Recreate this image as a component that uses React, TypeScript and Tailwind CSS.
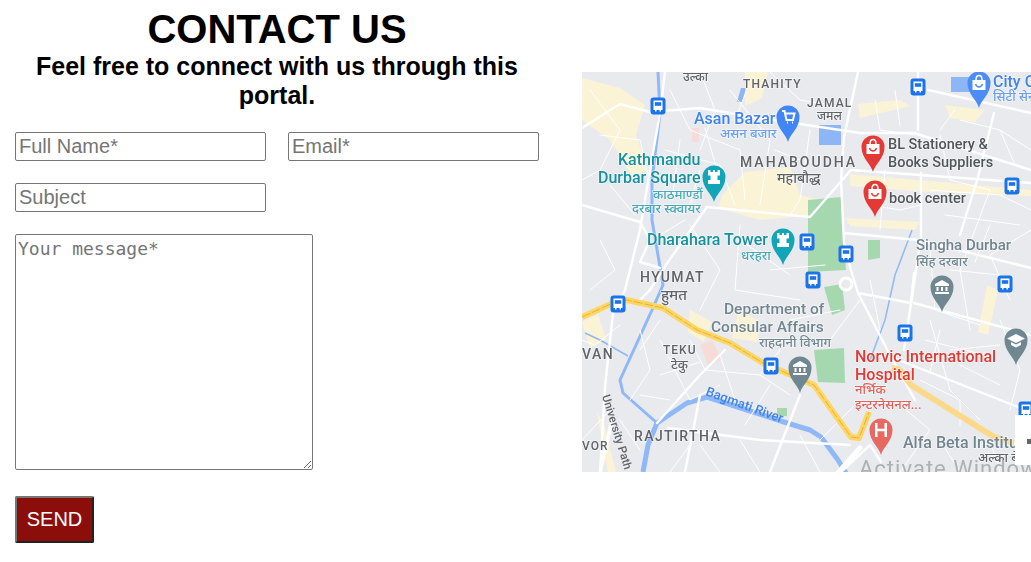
const fieldClass =
  "h-[29px] w-[251px] rounded-[2px] border border-[#767676] bg-white px-[3px] pb-[2px] text-[20px] text-black outline-none placeholder:text-[#757575]";

const ROADS_MAIN = [
  "582,128 620,104 650,112 700,108 760,118 860,133 914,133 1031,170",
  "665,72 660,113 650,170 640,230 625,290 613,313 605,387 600,473",
  "858,72 844,137 841,180 844,243 851,270 858,293 891,357 915,400",
  "582,205 640,222 650,240 640,262 660,268",
  "707,207 810,217 851,170 1031,183",
  "928,90 1031,113",
  "918,72 918,130",
  "994,113 978,177 960,235",
  "921,173 921,237 904,350",
  "844,233 918,240 1031,268",
  "858,293 911,303 914,273",
  "707,207 668,262 650,290 640,300",
  "657,423 700,375 725,350",
  "840,473 870,445 881,462",
  "668,428 760,440 850,445",
  "700,395 685,472",
  "800,395 770,472",
  "914,303 1031,335",
  "891,357 1031,412",
];

const ROADS_THIN = [
  "590,90 620,130 600,170 582,180",
  "600,135 640,140 648,175",
  "670,90 690,130 740,150 745,200",
  "665,150 720,165 735,205",
  "700,72 715,110 700,150",
  "730,90 770,140 760,205",
  "770,72 800,100 830,105",
  "810,130 800,200 790,215",
  "875,100 880,130 915,135",
  "940,135 950,180 990,190",
  "960,120 1000,130 1031,150",
  "870,205 900,210 921,205",
  "930,190 1000,195 1031,210",
  "990,190 960,270 970,330",
  "1031,230 990,255 1010,300",
  "930,250 935,310 980,325",
  "690,225 720,270 700,310",
  "740,225 735,290 800,300",
  "770,270 825,265",
  "600,240 615,270 590,290",
  "640,330 650,370 630,400",
  "660,340 690,400 720,385",
  "690,340 705,370 760,375 790,395",
  "760,375 780,350",
  "620,325 595,345 582,340",
  "610,410 582,440",
  "640,395 670,400",
  "700,445 720,472",
  "740,440 760,472",
  "800,435 820,472",
  "930,320 950,390 980,420",
  "900,405 930,430 900,472",
  "920,380 960,400 960,425",
  "1000,320 1020,370 1010,410",
  "860,300 830,340 815,345",
  "790,320 840,310",
  "705,128 720,180",
  "950,350 1000,345",
  "940,330 930,372",
  "680,140 672,200",
  "685,220 660,235",
  "610,185 635,215",
  "700,170 690,205",
  "775,150 800,160",
  "740,240 790,275",
  "660,320 640,350",
  "720,355 735,400",
  "770,385 745,425",
  "660,375 700,362",
  "620,420 640,450",
  "690,445 670,472",
  "820,440 860,400",
  "880,230 885,170",
  "945,215 1020,225",
  "990,225 975,262",
  "1000,130 1015,165",
  "950,270 1000,275",
  "925,340 985,355",
  "960,365 1000,385",
  "940,440 960,472",
  "990,440 1000,472",
  "895,90 900,125",
  "955,110 940,130",
  "870,280 880,330",
  "735,120 745,95",
];

const PINS = [
  { x: 788, y: 117, c: "#4285f4", icon: "cart" },
  { x: 714, y: 177, c: "#12a5b8", icon: "rook" },
  { x: 783, y: 240, c: "#12a5b8", icon: "rook" },
  { x: 873, y: 147, c: "#e53935", icon: "bag" },
  { x: 875, y: 192, c: "#e53935", icon: "bag" },
  { x: 979, y: 83, c: "#4c8df5", icon: "bag" },
  { x: 800, y: 368, c: "#6f8791", icon: "bank" },
  { x: 942, y: 287, c: "#6f8791", icon: "bank" },
  { x: 1016, y: 340, c: "#6f8791", icon: "grad" },
  { x: 881, y: 430, c: "#e66a62", icon: "h" },
];

const BUSES = [
  [658, 106],
  [807, 242],
  [918, 87],
  [1012, 186],
  [846, 254],
  [618, 304],
  [771, 366],
  [813, 280],
  [1005, 284],
  [905, 333],
  [1026, 410],
];

const BLUE = "#3f84ea";
const TEAL = "#16929f";
const GREY = "#5f6368";
const SLATE = "#70858f";
const RED = "#dd3b34";

const LABELS: [string, number, number, number, string, number?][] = [
  ["उल्का", 683, 81, 12, GREY],
  ["THAHITY", 743, 88, 12, GREY, 1.2],
  ["Asan Bazar", 694, 124, 16, BLUE],
  ["असन बजार", 720, 138, 13, "#6aa0ef"],
  ["JAMAL", 807, 107, 12, GREY, 1.2],
  ["जमल", 817, 120, 12, GREY],
  ["MAHABOUDHA", 740, 167, 14, GREY, 2],
  ["महाबौद्ध", 777, 183, 14, GREY],
  ["Kathmandu", 618, 165, 16, TEAL],
  ["Durbar Square", 598, 183, 16, TEAL],
  ["काठमाण्डौं", 653, 199, 13, "#45aab5"],
  ["दरबार स्क्वायर", 632, 213, 13, "#45aab5"],
  ["Dharahara Tower", 647, 245, 16, TEAL],
  ["धरहरा", 741, 260, 13, "#45aab5"],
  ["BL Stationery &", 888, 149, 14.5, "#51565a"],
  ["Books Suppliers", 888, 167, 14.5, "#51565a"],
  ["book center", 889, 203, 14.5, "#51565a"],
  ["Singha Durbar", 916, 250, 15, SLATE],
  ["सिंह दरबार", 916, 266, 13, SLATE],
  ["City C", 993, 87, 16, BLUE],
  ["सिटी सेन", 993, 101, 13, "#6aa0ef"],
  ["HYUMAT", 640, 282, 14, GREY, 1.5],
  ["हुमत", 661, 300, 15, GREY],
  ["Department of", 724, 314, 15.5, SLATE],
  ["Consular Affairs", 711, 332, 15.5, SLATE],
  ["राहदानी विभाग", 759, 347, 13, SLATE],
  ["VAN", 582, 359, 14, GREY, 1.5],
  ["TEKU", 663, 354, 12, GREY, 1],
  ["टेकु", 671, 369, 13, GREY],
  ["RAJTIRTHA", 634, 441, 14, GREY, 1.4],
  ["VOR", 582, 450, 12, GREY, 1],
  ["Norvic International", 855, 362, 16, RED],
  ["Hospital", 855, 380, 16, RED],
  ["नर्भिक", 855, 394, 13, "#e4605a"],
  ["इन्टरनेसनल...", 855, 409, 13, "#e4605a"],
  ["Alfa Beta Institu", 903, 448, 16, SLATE],
  ["अल्का बे", 978, 462, 13, GREY],
];

function Pin({ x, y, c, icon }: { x: number; y: number; c: string; icon: string }) {
  return (
    <g transform={`translate(${x} ${y})`}>
      <path d="M0 25C-2 17-11.500 11-11.500 0A11.500 11.500 0 0 1 11.500 0C11.500 11 2 17 0 25Z" fill={c} />
      {icon === "cart" && (
        <path d="M-6-6H-3.500L-1.500 3H5L6.500-3.500H-2.800M-1 5.500H0M4 5.500H5" fill="none" stroke="#fff" strokeWidth="2" />
      )}
      {icon === "rook" && (
        <path d="M-6-7H-3.500V-5H-1V-7H1V-5H3.500V-7H6V-1.500H3.500V3H6V7H-6V3H-3.500V-1.500H-6Z" fill="#fff" />
      )}
      {icon === "bag" && (
        <>
          <path d="M-6.500-3H6.500V7H-6.500Z" fill="#fff" />
          <path d="M-3-3C-3-9 3-9 3-3" fill="none" stroke="#fff" strokeWidth="1.500" />
          <path d="M-3.500 1C-2 5 2 5 3.500 1" fill="none" stroke={c} strokeWidth="1.500" />
        </>
      )}
      {icon === "bank" && (
        <path d="M0-7L7-3V-1H-7V-3ZM-5.500 0H-3.500V4H-5.500ZM-1 0H1V4H-1ZM3.500 0H5.500V4H3.500ZM-7 5H7V7H-7Z" fill="#fff" />
      )}
      {icon === "grad" && (
        <path d="M0-6L9-1.500 0 3-9-1.500ZM-5 2L0 4.500 5 2V5L0 7.500-5 5Z" fill="#fff" />
      )}
      {icon === "h" && (
        <path d="M-6-7H-3.500V-1.200H3.500V-7H6V7H3.500V1.200H-3.500V7H-6Z" fill="#fff" />
      )}
    </g>
  );
}

function Bus({ x, y }: { x: number; y: number }) {
  return (
    <g transform={`translate(${x} ${y})`}>
      <rect x="-7.500" y="-8.500" width="15" height="17" rx="3" fill="#1a73e8" />
      <path d="M-4.500-5.500H4.500V4H3V5.500H1.500V4H-1.500V5.500H-3V4H-4.500Z" fill="#fff" />
      <rect x="-3.200" y="-3.800" width="6.400" height="3.600" fill="#1a73e8" />
    </g>
  );
}

function MapImage() {
  return (
    <svg viewBox="582 72 449 400" className="block h-[400px] w-[449px] shrink-0 blur-[0.45px]">
      <rect x="582" y="72" width="449" height="400" fill="#e9eaee" />

      {/* built up areas */}
      <g fill="#fbf3d6">
        <path d="M582 78L620 88 645 105 636 135 648 170 632 176 610 140 582 120Z" />
        <path d="M745 72H768L762 98 745 106Z" />
        <path d="M722 195L745 172 790 167 800 195 842 205 842 213 760 220 718 208Z" />
        <path d="M850 174L1031 190V196L930 192 850 186Z" />
        <path d="M858 104L900 100 910 106 860 118Z" />
        <path d="M945 105L985 110 975 122 950 118Z" />
        <path d="M845 218L920 222 915 230 850 226Z" />
        <path d="M582 322L598 314 606 340 590 348Z" />
        <path d="M690 310L712 322 704 342 688 332Z" />
        <path d="M738 312L758 320 758 342 732 338Z" />
        <path d="M987 285L998 290 988 335 978 332Z" />
        <path d="M597 412L604 425 616 472H608Z" />
      </g>

      {/* parks and hospital grounds */}
      <g fill="#a6d8b0">
        <path d="M808 200L842 197 846 270 808 272Z" />
        <path d="M824 287L842 284 845 310 832 315Z" />
        <path d="M814 350L844 348 845 383 818 382Z" />
        <path d="M868 240L880 240 880 258 868 260Z" />
        <path d="M777 408L787 408 787 416 777 416Z" />
      </g>
      <g fill="#f6dcd8">
        <path d="M700 345L712 340 722 360 708 365Z" />
        <path d="M692 128L699 128 699 142 692 142Z" />
      </g>

      {/* water */}
      <g fill="#8db6f7">
        <rect x="819" y="125" width="22" height="20" />
        <rect x="951" y="77" width="20" height="15" />
        <path d="M741 88L746 88 742 102 737 102Z" />
      </g>
      <g fill="none" stroke="#8fb8f8" strokeLinejoin="round">
        <polyline strokeWidth="3" points="658,72 660,113 652,180 652,220 660,267 663,285 652,310 620,380 623,393 657,423" />
        <polyline strokeWidth="1.500" points="585,333 600,340 628,356" />
        <polyline strokeWidth="1.500" points="895,275 885,320 870,360" />
        <polyline strokeWidth="5" points="657,423 687,403 707,397 747,410 787,423 810,430 821,437 838,460 846,473" />
        <polyline strokeWidth="5" points="657,423 648,445 643,472" />
        <polyline strokeWidth="1.500" points="912,230 900,262 895,275" />
      </g>

      {/* streets */}
      <g fill="none" stroke="#fff" strokeLinejoin="round" strokeLinecap="round">
        {ROADS_THIN.map((p) => (
          <polyline key={p} points={p} strokeWidth="1" />
        ))}
        {ROADS_MAIN.map((p) => (
          <polyline key={p} points={p} strokeWidth="2.400" />
        ))}
        <circle cx="846" cy="284" r="6" strokeWidth="3" />
        <polyline points="600,473 612,420" strokeWidth="3.500" />
        <polyline points="838,473 860,448" strokeWidth="5" />
      </g>

      {/* ring road */}
      <g fill="none" strokeLinejoin="round">
        <polyline
          stroke="#fdd663"
          strokeWidth="6"
          points="582,317 613,303 627,300 663,308 697,330 730,343 763,363 814,385 851,437 859,438 869,412"
        />
        <polyline
          stroke="#efae3d"
          strokeWidth="1"
          strokeDasharray="9 2"
          points="582,317 613,303 627,300 663,308 697,330 730,343 763,363 814,385 851,437 859,438 869,412"
        />
        <polyline stroke="#fcd98a" strokeWidth="6" points="892,368 900,370 911,385 994,437 1014,443" />
      </g>

      {LABELS.map(([text, x, y, size, fill, spacing]) => (
        <text
          key={text}
          x={x}
          y={y}
          fill={fill}
          fontSize={size}
          fontWeight="500"
          letterSpacing={spacing}
          stroke="#fff"
          strokeOpacity="0.55"
          strokeWidth="1.500"
          paintOrder="stroke"
          fontFamily="Roboto, 'Noto Sans', 'Noto Sans Devanagari', sans-serif"
        >
          {text}
        </text>
      ))}
      <text
        x="705"
        y="395"
        transform="rotate(20 705 395)"
        fill={BLUE}
        fontSize="13"
        fontWeight="500"
        fontFamily="Roboto, sans-serif"
      >
        Bagmati River
      </text>
      <text
        x="602"
        y="396"
        transform="rotate(73 602 396)"
        fill={GREY}
        fontSize="11.500"
        fontWeight="500"
        fontFamily="Roboto, sans-serif"
      >
        University Path
      </text>

      {PINS.map((p) => (
        <Pin key={`${p.x}-${p.y}`} {...p} />
      ))}
      {BUSES.map(([x, y]) => (
        <Bus key={`${x}-${y}`} x={x} y={y} />
      ))}

      {/* zoom control and the windows watermark */}
      <text x="859" y="476" fill="#aeb0b4" fontSize="22" fontFamily="Roboto, sans-serif" letterSpacing="1">
        Activate Windows
      </text>
      <rect x="1015" y="415" width="16" height="50" fill="#fff" />
      <rect x="1027" y="439" width="4" height="5" fill="#666" />
    </svg>
  );
}

export default function App() {
  return (
    <div className="flex h-[562px] w-[1031px] overflow-hidden bg-white font-['Liberation_Sans',sans-serif] text-black">
      <div className="w-[554px] shrink-0 pl-[15px]">
        <h1 className="-ml-[15px] mt-[7px] text-center text-[40px] font-bold leading-[44px]">CONTACT US</h1>
        <h3 className="-ml-[15px] mt-[1px] text-center text-[25px] font-bold leading-[29px]">
          Feel free to connect with us through this portal.
        </h3>
        <form className="mt-[22px]" onSubmit={(e) => e.preventDefault()}>
          <div className="flex gap-[22px]">
            <input type="text" placeholder="Full Name*" className={fieldClass} />
            <input type="email" placeholder="Email*" className={fieldClass} />
          </div>
          <input type="text" placeholder="Subject" className={`mt-[22px] block ${fieldClass}`} />
          <textarea
            placeholder="Your message*"
            className="mt-[22px] block h-[236px] w-[298px] rounded-[2px] border border-[#767676] bg-white px-[2px] py-0 font-['DejaVu_Sans_Mono',monospace] text-[18px] text-black outline-none placeholder:text-[#757575]"
          />
          <button
            type="submit"
            className="mt-[26px] block h-[47px] w-[79px] rounded-[2px] border-2 border-b-[#212121] border-l-[#767676] border-r-[#212121] border-t-[#767676] bg-[#8b0e0b] pb-[2px] text-[20px] text-white"
          >
            SEND
          </button>
        </form>
      </div>
      <div className="ml-[28px] mt-[72px]">
        <MapImage />
      </div>
    </div>
  );
}
